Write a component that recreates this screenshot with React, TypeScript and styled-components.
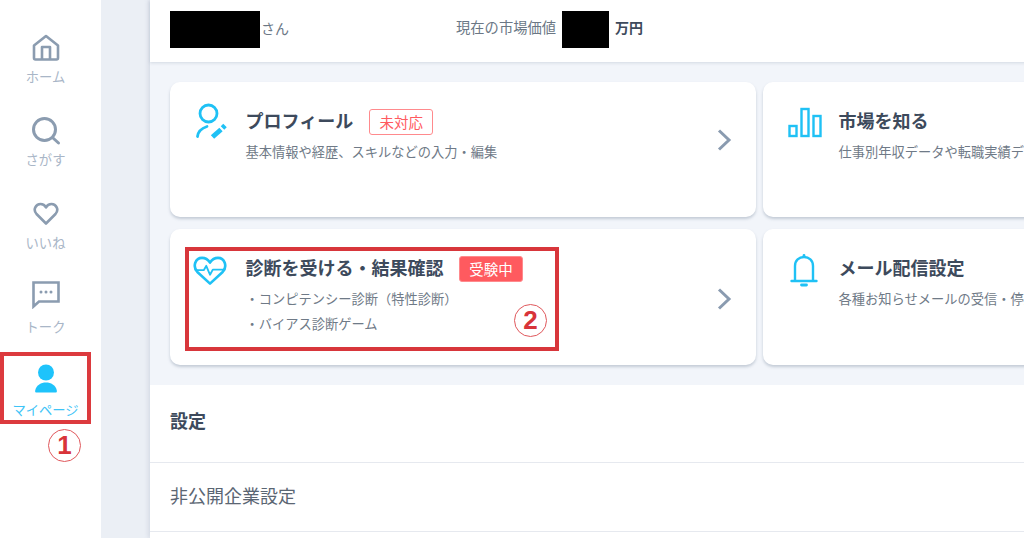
import React from "react";
import styled, { createGlobalStyle } from "styled-components";

const GlobalStyle = createGlobalStyle`
  html, body {
    margin: 0;
    padding: 0;
    height: 538px;
    overflow: hidden;
    background: #ebeff5;
    font-family: "Noto Sans CJK JP", "Noto Sans", sans-serif;
  }
  * { box-sizing: border-box; }
`;

const Page = styled.div`
  display: flex;
  width: 1024px;
  height: 538px;
  overflow: hidden;
`;

const Sidebar = styled.nav`
  position: relative;
  flex: 0 0 101px;
  background: #fff;
  padding-top: 24px;
  display: flex;
  flex-direction: column;
  align-items: stretch;
`;

const NavItem = styled.div<{ $active?: boolean }>`
  height: 83.2px;
  width: 91px;
  display: flex;
  flex-direction: column;
  align-items: center;
  color: ${(p) => (p.$active ? "#3ec4f7" : "#a9b6c7")};
  font-size: 13.3px;
  line-height: 16px;
`;

const NavIcon = styled.div<{ $top: number }>`
  height: 45px;
  padding-top: ${(p) => p.$top}px;
  display: flex;
  align-items: flex-start;
  justify-content: center;
`;

const SideMark = styled.div`
  position: absolute;
  left: 0;
  top: 352px;
  width: 91px;
  height: 72px;
  border: 4px solid #dc3a3e;
`;

const Circled = styled.div`
  position: absolute;
  width: 33px;
  height: 33px;
  border: 1.5px solid #e0585c;
  border-radius: 50%;
  color: #d8343a;
  font-family: "Liberation Sans", sans-serif;
  font-weight: 700;
  font-size: 26px;
  line-height: 30px;
  text-align: center;
`;

const SideNumber = styled(Circled)`
  left: 48px;
  top: 429px;
`;

const Gutter = styled.div`
  flex: 0 0 49px;
  background: #ebeff5;
`;

const Main = styled.main`
  flex: 0 0 874px;
  background: #f2f5fa;
  box-shadow: -2px 0 4px rgba(120, 135, 160, 0.18);
  display: flex;
  flex-direction: column;
`;

const TopBar = styled.header`
  height: 62px;
  background: #fff;
  box-shadow: 0 1px 3px rgba(120, 135, 160, 0.25);
  display: flex;
  align-items: center;
  padding-left: 20px;
  padding-bottom: 3px;
  font-size: 14px;
  color: #6b7785;
`;

const Redact = styled.div<{ $w: number }>`
  width: ${(p) => p.$w}px;
  height: 37px;
  background: #000;
`;

const Honorific = styled.span`
  margin: 0 0 4px 1px;
  width: 195px;
`;

const MarketLabel = styled.span`
  font-size: 14.3px;
  margin: 0 6px 6px 0;
`;

const MarketUnit = styled.span`
  margin: 0 0 6px 6px;
  font-weight: 700;
  color: #3d4a5c;
`;

const CardGrid = styled.section`
  display: grid;
  grid-template-columns: 586px 586px;
  grid-template-rows: 135px 136px;
  column-gap: 7px;
  row-gap: 12px;
  padding: 20px 0 0 20px;
`;

const Card = styled.article`
  position: relative;
  background: #fff;
  border-radius: 10px;
  box-shadow: 0 2px 3px rgba(110, 125, 150, 0.35);
  display: flex;
  padding: 20px 0 0 24px;
`;

const CardIcon = styled.div<{ $top: number; $left?: number }>`
  flex: 0 0 51.5px;
  padding-top: ${(p) => p.$top}px;
  margin-left: ${(p) => p.$left ?? 0}px;
  margin-right: ${(p) => -(p.$left ?? 0)}px;
`;

const CardBody = styled.div`
  display: flex;
  flex-direction: column;
`;

const TitleRow = styled.div`
  display: flex;
  align-items: center;
  height: 36px;
`;

const CardTitle = styled.h2`
  margin: 0;
  font-size: 18px;
  line-height: 36px;
  font-weight: 700;
  color: #3d4a5c;
  white-space: nowrap;
`;

const Tag = styled.span<{ $filled?: boolean }>`
  margin: 4px 0 0 ${(p) => (p.$filled ? 15.5 : 16)}px;
  width: 64px;
  height: 26px;
  border-radius: 3px;
  border: 1px solid #ff8a8d;
  background: ${(p) => (p.$filled ? "#ff5a5f" : "#fff")};
  color: ${(p) => (p.$filled ? "#fff" : "#ff5a5f")};
  font-size: 14.5px;
  line-height: 24px;
  text-align: center;
`;

const CardText = styled.p`
  margin: 4px 0 0;
  font-size: 13.25px;
  line-height: 20px;
  color: #6f7a87;
  white-space: nowrap;
`;

const ListText = styled.p`
  margin: 0;
  font-size: 13.25px;
  line-height: 25px;
  color: #6f7a87;
  white-space: nowrap;
`;

const TextList = styled.div`
  margin-top: 1px;
`;

const Chevron = styled.svg<{ $top: number }>`
  position: absolute;
  left: 546px;
  top: ${(p) => p.$top}px;
`;

const CardMark = styled.div`
  position: absolute;
  left: 15px;
  top: 18px;
  width: 374px;
  height: 104px;
  border: 4px solid #d8363b;
`;

const CardNumber = styled(Circled)`
  left: 344px;
  top: 75px;
`;

const Settings = styled.section`
  margin-top: 20px;
  flex: 1;
  background: #fff;
`;

const SettingsHead = styled.h3`
  margin: 0;
  height: 78px;
  padding: 23px 0 0 20px;
  font-size: 18px;
  line-height: 24px;
  font-weight: 700;
  color: #3d4a5c;
  border-bottom: 1px solid #e6e9ef;
`;

const SettingsRow = styled.div`
  height: 69px;
  padding: 20px 0 0 20px;
  font-size: 18px;
  line-height: 24px;
  color: #5b6673;
  border-bottom: 1px solid #e6e9ef;
`;

const Chev = ({ top }: { top: number }) => (
  <Chevron $top={top} width="18" height="26" viewBox="0 0 18 26" fill="none">
    <path d="M3 3.5 L13 13 L3 22.5" stroke="#8a9bb0" strokeWidth="3" />
  </Chevron>
);

const grey = "#8b9cb0";
const blue = "#1fc1f5";

export default function App() {
  return (
    <Page>
      <GlobalStyle />
      <Sidebar>
        <NavItem>
          <NavIcon $top={10}>
            <svg width="28" height="28" viewBox="0 0 28 28" fill="none" stroke={grey} strokeWidth="2.6" strokeLinejoin="round">
              <path d="M14 2 L26 11.5 V24 a1.5 1.5 0 0 1 -1.5 1.5 H3.5 A1.5 1.5 0 0 1 2 24 V11.5 Z" />
              <path d="M10 25 V13 H18 V25" />
            </svg>
          </NavIcon>
          ホーム
        </NavItem>
        <NavItem>
          <NavIcon $top={9}>
            <svg width="30" height="30" viewBox="0 0 30 30" fill="none" stroke={grey} strokeWidth="3" strokeLinecap="round">
              <circle cx="13.5" cy="13.5" r="11" />
              <path d="M22 22 L27.5 27" />
            </svg>
          </NavIcon>
          さがす
        </NavItem>
        <NavItem>
          <NavIcon $top={12}>
            <svg width="26" height="24" viewBox="0 0 26 24" fill="none" stroke={grey} strokeWidth="2.6" strokeLinejoin="round">
              <path d="M13 21.5 L3.5 12 C-0.5 7.5 3 2 7.5 2 C10 2 12 3.5 13 5.5 C14 3.5 16 2 18.5 2 C23 2 26.5 7.5 22.5 12 Z" />
            </svg>
          </NavIcon>
          いいね
        </NavItem>
        <NavItem>
          <NavIcon $top={7}>
            <svg width="28" height="28" viewBox="0 0 28 28">
              <path d="M1.5 1.5 H26.5 V20.5 H7 L1.5 25.5 Z" fill="none" stroke={grey} strokeWidth="2.6" strokeLinejoin="miter" />
              <circle cx="9" cy="11" r="1.5" fill={grey} />
              <circle cx="14" cy="11" r="1.5" fill={grey} />
              <circle cx="19" cy="11" r="1.5" fill={grey} />
            </svg>
          </NavIcon>
          トーク
        </NavItem>
        <NavItem $active>
          <NavIcon $top={7}>
            <svg width="24" height="30" viewBox="0 0 24 30" fill="#1ec3fb">
              <circle cx="12" cy="8.5" r="8" />
              <path d="M2 28.5 C1 28.5 1 27.5 1.3 26 C2.5 21 7 18.5 12 18.5 C17 18.5 21.5 21 22.7 26 C23 27.5 23 28.5 22 28.5 Z" />
            </svg>
          </NavIcon>
          マイページ
        </NavItem>
        <SideMark />
        <SideNumber>1</SideNumber>
      </Sidebar>
      <Gutter />
      <Main>
        <TopBar>
          <Redact $w={90} />
          <Honorific>さん</Honorific>
          <MarketLabel>現在の市場価値</MarketLabel>
          <Redact $w={47} />
          <MarketUnit>万円</MarketUnit>
        </TopBar>
        <CardGrid>
          <Card>
            <CardIcon $top={1}>
              <svg width="34" height="37" viewBox="0 0 34 37" fill="none" stroke={blue} strokeWidth="2.8" strokeLinecap="round">
                <circle cx="14.5" cy="10.5" r="8.5" />
                <path d="M3.5 33.5 C4 29 7 25.5 13 23.5" />
                <path d="M18.5 34 L27 26.5" strokeWidth="5" strokeLinecap="butt" />
                <path d="M28.5 25 L31 22.5" strokeWidth="5" strokeLinecap="butt" />
              </svg>
            </CardIcon>
            <CardBody>
              <TitleRow>
                <CardTitle>プロフィール</CardTitle>
                <Tag>未対応</Tag>
              </TitleRow>
              <CardText>基本情報や経歴、スキルなどの入力・編集</CardText>
            </CardBody>
            <Chev top={45} />
          </Card>
          <Card>
            <CardIcon $top={5} $left={1}>
              <svg width="34" height="32" viewBox="0 0 34 32" fill="none" stroke={blue} strokeWidth="2.4">
                <rect x="1.5" y="19" width="7" height="10" />
                <rect x="13.5" y="2" width="7" height="27" />
                <rect x="25.5" y="9" width="7" height="20" />
              </svg>
            </CardIcon>
            <CardBody>
              <TitleRow>
                <CardTitle>市場を知る</CardTitle>
              </TitleRow>
              <CardText>仕事別年収データや転職実績データ</CardText>
            </CardBody>
          </Card>
          <Card>
            <CardIcon $top={7} $left={-1}>
              <svg width="34" height="30" viewBox="0 0 36 32" fill="none" stroke={blue} strokeWidth="2.8" strokeLinejoin="round">
                <path d="M18 29.5 L4.5 17 C-1 11 2.5 2 9.5 2 C13 2 16 4 18 7 C20 4 23 2 26.5 2 C33.5 2 37 11 31.5 17 Z" />
                <path d="M2.5 15 H11.5 L14 10.5 L18 20 L21 14.5 H33.5" strokeWidth="2" />
              </svg>
            </CardIcon>
            <CardBody>
              <TitleRow>
                <CardTitle>診断を受ける・結果確認</CardTitle>
                <Tag $filled>受験中</Tag>
              </TitleRow>
              <TextList>
                <ListText>・コンピテンシー診断（特性診断）</ListText>
                <ListText>・バイアス診断ゲーム</ListText>
              </TextList>
            </CardBody>
            <Chev top={57} />
            <CardMark />
            <CardNumber>2</CardNumber>
          </Card>
          <Card>
            <CardIcon $top={4} $left={3}>
              <svg width="28" height="34" viewBox="0 0 28 34" fill="none" stroke={blue} strokeWidth="2.4" strokeLinecap="round">
                <path d="M5 27 V13 C5 7.5 9 4 14 4 C19 4 23 7.5 23 13 V27" />
                <path d="M1.5 28 H26.5" />
                <path d="M11.5 32 H16.5" strokeWidth="2.8" />
                <circle cx="14" cy="2.5" r="1.4" fill={blue} stroke="none" />
              </svg>
            </CardIcon>
            <CardBody>
              <TitleRow>
                <CardTitle>メール配信設定</CardTitle>
              </TitleRow>
              <CardText>各種お知らせメールの受信・停止</CardText>
            </CardBody>
          </Card>
        </CardGrid>
        <Settings>
          <SettingsHead>設定</SettingsHead>
          <SettingsRow>非公開企業設定</SettingsRow>
        </Settings>
      </Main>
    </Page>
  );
}
